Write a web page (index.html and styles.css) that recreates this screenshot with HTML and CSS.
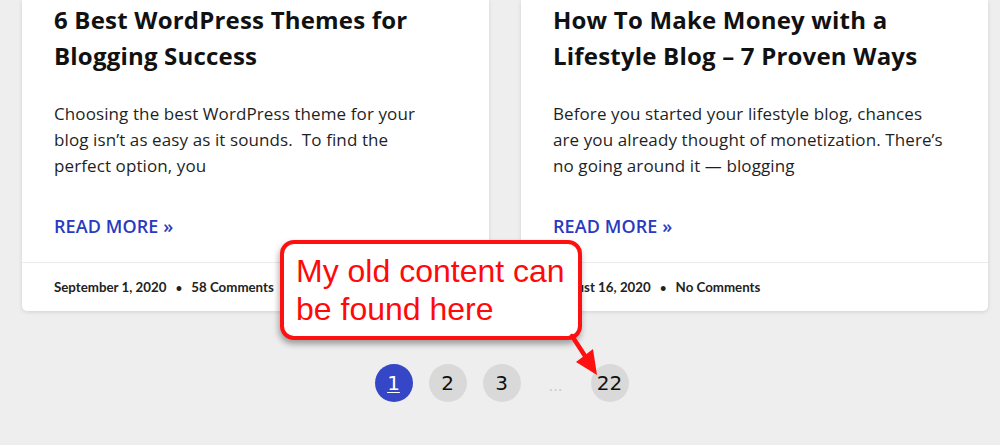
FILE: index.html
```html
<!DOCTYPE html>
<html lang="en">
<head>
<meta charset="utf-8">
<title>Blog</title>
<link rel="stylesheet" href="styles.css">
</head>
<body>
<div class="page">
  <div class="cards">
    <article class="card">
      <div class="card-body">
        <h2 class="title">6 Best WordPress Themes for Blogging Success</h2>
        <p class="excerpt">Choosing the best WordPress theme for your<br>blog isn’t as easy as it sounds.&nbsp; To find the<br>perfect option, you</p>
        <a class="more" href="#">READ MORE »</a>
      </div>
      <div class="card-meta">September 1, 2020 <span class="sep">•</span> 58 Comments</div>
    </article>
    <article class="card">
      <div class="card-body">
        <h2 class="title">How To Make Money with a Lifestyle Blog – 7 Proven Ways</h2>
        <p class="excerpt">Before you started your lifestyle blog, chances<br>are you already thought of monetization. There’s<br>no going around it — blogging</p>
        <a class="more" href="#">READ MORE »</a>
      </div>
      <div class="card-meta">August 16, 2020 <span class="sep">•</span> No Comments</div>
    </article>
  </div>
  <nav class="pagination">
    <a class="page-num current" href="#">1</a>
    <a class="page-num" href="#">2</a>
    <a class="page-num" href="#">3</a>
    <span class="dots">…</span>
    <a class="page-num" href="#">22</a>
  </nav>
</div>
<div class="callout">My old content can<br>be found here</div>
<svg class="arrow" width="1000" height="445" viewBox="0 0 1000 445">
  <line x1="572" y1="336" x2="587" y2="359" stroke="#ff1010" stroke-width="4.5" stroke-linecap="round"/>
  <polygon points="597,375 576,362 593,349" fill="#ff1010"/>
</svg>
</body>
</html>
```
FILE: styles.css
```css
html, body {
  margin: 0;
  padding: 0;
}
body {
  background: #eeeeee;
  font-family: "Open Sans", Lato, sans-serif;
  color: #1a1a1a;
  width: 1000px;
  height: 445px;
  overflow: hidden;
  position: relative;
}
.page {
  padding: 0 11px 0 22px;
}
.cards {
  display: grid;
  grid-template-columns: 467px 467px;
  column-gap: 32px;
}
.card {
  background: #fff;
  border-radius: 0 0 5px 5px;
  box-shadow: 0 1px 4px rgba(0,0,0,0.12);
}
.card-body {
  padding: 2px 24px 23px 32px;
}
.title {
  margin: 0;
  max-width: 385px;
  font-size: 24px;
  line-height: 36px;
  font-weight: 700;
  letter-spacing: 0.2px;
  color: #111;
}
.excerpt {
  margin: 27px 0 0;
  font-size: 17px;
  line-height: 26px;
  letter-spacing: 0.1px;
  white-space: nowrap;
  color: #1f1f1f;
}
.more {
  display: block;
  margin-top: 34px;
  font-size: 18px;
  line-height: 26px;
  font-weight: 600;
  letter-spacing: 0.1px;
  color: #2a3ac0;
  text-decoration: none;
}
.card-meta {
  border-top: 1px solid #ececec;
  padding: 14px 32px 13px;
  font-family: Lato, sans-serif;
  font-size: 13.3px;
  line-height: 20px;
  font-weight: 700;
  color: #222;
}
.sep {
  margin: 0 6px;
  font-size: 11px;
}
.pagination {
  display: flex;
  justify-content: center;
  gap: 16px;
  margin-top: 53px;
  padding-right: 8px;
}
.page-num, .dots {
  width: 38px;
  height: 38px;
  border-radius: 50%;
  display: flex;
  align-items: center;
  justify-content: center;
  font-family: "DejaVu Sans", Verdana, sans-serif;
  font-size: 20px;
  color: #111;
  text-decoration: none;
}
.page-num {
  background: #d9d9d9;
}
.page-num.current {
  background: #3546c6;
  color: #fff;
  text-decoration: underline;
  text-underline-offset: 2px;
  text-decoration-thickness: 1px;
}
.dots {
  color: #c6c6c6;
  font-size: 14px;
  padding-top: 6px;
  box-sizing: border-box;
}
.callout {
  position: absolute;
  left: 280px;
  top: 240px;
  width: 302px;
  height: 100px;
  box-sizing: border-box;
  border: 4px solid #ff1010;
  border-radius: 14px;
  background: #fff;
  box-shadow: -1px 4px 6px rgba(0,0,0,0.35);
  padding: 8px 0 0 12px;
  font-family: "Liberation Sans", Arial, sans-serif;
  font-size: 32px;
  line-height: 38px;
  color: #ff0a0a;
}
.arrow {
  position: absolute;
  left: 0;
  top: 0;
  pointer-events: none;
}
```
